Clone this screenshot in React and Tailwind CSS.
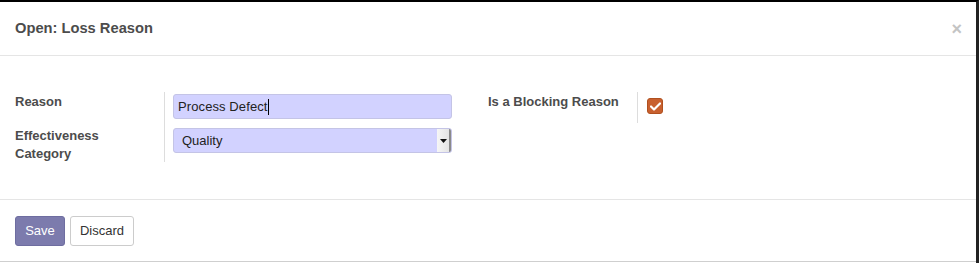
import React from "react";

export default function App() {
  return (
    <div className="w-[979px] h-[263px] bg-white font-['Liberation_Sans',Arial,sans-serif] text-[#4c4c4c] border-t-2 border-t-black border-r-[3px] border-r-[#222] flex flex-col overflow-hidden">
      {/* Header */}
      <div className="h-[54px] shrink-0 flex items-center justify-between pl-[15px] pr-[14px] border-b border-[#e5e5e5]">
        <h4 className="text-[14.7px] font-bold text-[#4c4c4c] leading-none">Open: Loss Reason</h4>
        <span className="text-[18px] font-bold text-[#c4c4c4] leading-none">×</span>
      </div>

      {/* Body */}
      <div className="h-[143px] shrink-0 flex pt-[36px] pl-[15px]">
        {/* Left group */}
        <div className="w-[473px] grid grid-cols-[149px_288px] content-start">
          <div className="h-[34px] text-[13px] font-bold leading-[18px] pt-px">Reason</div>
          <div className="h-[34px] border-l border-[#dddddd] pl-[8px] pt-[2px]">
            <div className="h-[25px] w-[279px] bg-[#d2d2ff] border border-[#c4c4e6] rounded-[3px] flex items-center pl-[4px] text-[13px] text-[#222] tracking-[0.1px]">
              <span>Process Defect</span>
              <span className="w-px h-[16px] bg-black"></span>
            </div>
          </div>
          <div className="h-[36px] text-[13px] font-bold leading-[18px] pt-px">
            Effectiveness
            <br />
            Category
          </div>
          <div className="h-[36px] border-l border-[#dddddd] pl-[8px] pt-[2px]">
            <div className="h-[25px] w-[279px] bg-[#d2d2ff] border border-[#c4c4e6] rounded-[3px] flex items-center justify-between pl-[8px] text-[13px] text-[#222] overflow-hidden">
              <span>Quality</span>
              <div className="h-full w-[14px] bg-gradient-to-r from-[#f6f6f6] to-[#e4e4e4] border-r-2 border-r-[#8a8a8a] flex items-center justify-center">
                <svg width="7" height="4" viewBox="0 0 7 4">
                  <path d="M0 0H7L3.5 4Z" fill="#111" />
                </svg>
              </div>
            </div>
          </div>
        </div>

        {/* Right group */}
        <div className="grid grid-cols-[149px_120px] content-start">
          <div className="h-[31px] text-[13px] font-bold leading-[18px] pt-px">Is a Blocking Reason</div>
          <div className="h-[31px] border-l border-[#dddddd] pl-[9px] pt-[6px]">
            <div className="w-[16px] h-[16px] rounded-[3px] bg-[#c8602f] border border-[#b0501f] flex items-center justify-center">
              <svg width="11" height="9" viewBox="0 0 11 9">
                <path d="M1 4.5L4 7.5L10 1.5" stroke="white" strokeWidth="2.2" fill="none" strokeLinecap="round" strokeLinejoin="round" />
              </svg>
            </div>
          </div>
        </div>
      </div>

      {/* Footer */}
      <div className="h-[63px] shrink-0 border-t border-[#e5e5e5] border-b border-b-[#cfcfcf] flex items-start pl-[15px] pt-[16px] gap-[5px]">
        <button className="w-[50px] h-[30px] bg-[#7c7bad] text-white text-[13px] rounded-[3px] border border-[#6e6da0]">Save</button>
        <button className="w-[64px] h-[30px] bg-white text-[#333] text-[13px] rounded-[3px] border border-[#cccccc]">Discard</button>
      </div>
    </div>
  );
}
